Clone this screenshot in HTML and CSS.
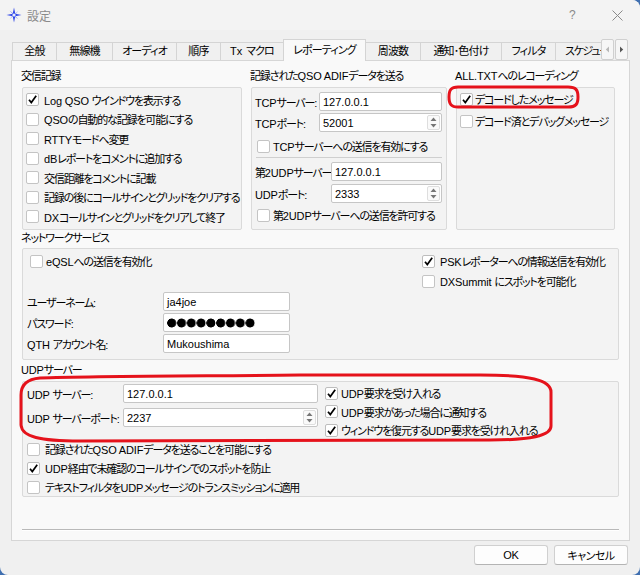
FILE: index.html
```html
<!DOCTYPE html>
<html lang="ja">
<head>
<meta charset="utf-8">
<title>設定</title>
<link rel="stylesheet" href="styles.css">
</head>
<body>
<div class="window">
  <div class="titlebar">
    <svg class="appicon" width="16" height="16" viewBox="0 0 16 16">
      <path d="M8 0.5 L9.3 6.7 L15.5 8 L9.3 9.3 L8 15.5 L6.7 9.3 L0.5 8 L6.7 6.7 Z" fill="#2f47e8"/>
      <path d="M3.5 3.5 L8.6 7.4 L12.5 3.5 L8.6 8.6 L12.5 12.5 L7.4 8.6 L3.5 12.5 L7.4 7.4 Z" fill="#5c70f0"/>
      <circle cx="8" cy="8" r="1.6" fill="#e8ecff"/>
    </svg>
    <span class="title">設定</span>
    <span class="tb-help">?</span>
    <span class="tb-close"><svg width="11" height="11" viewBox="0 0 11 11"><path d="M0.5 0.5 L10.5 10.5 M10.5 0.5 L0.5 10.5" stroke="#8a8a8a" stroke-width="1" fill="none"/></svg></span>
  </div>

  <div class="tabs">
    <div class="tablist">
      <div class="tab">全般</div>
      <div class="tab">無線機</div>
      <div class="tab">オーディオ</div>
      <div class="tab">順序</div>
      <div class="tab"><span class="en tx">Tx</span>マクロ</div>
      <div class="tab active">レポーティング</div>
      <div class="tab">周波数</div>
      <div class="tab">通知･色付け</div>
      <div class="tab">フィルタ</div>
      <div class="tab">スケジュール</div>
    </div>
    <div class="tabnav">
      <span class="navbtn"><svg width="5" height="7" viewBox="0 0 5 7"><path d="M4 0.5 L0.8 3.5 L4 6.5 Z" fill="#b8b8b8"/></svg></span>
      <span class="navbtn"><svg width="5" height="7" viewBox="0 0 5 7"><path d="M1 0.5 L4.2 3.5 L1 6.5 Z" fill="#555"/></svg></span>
    </div>
  </div>

  <div class="panel">
    <div class="row1">
      <section class="group">
        <div class="gtitle">交信記録</div>
        <div class="frame f-log">
          <div class="cb"><span class="box on"><svg width="11" height="11" viewBox="0 0 11 11"><path d="M2 5.8 L4.3 8.6 L9.2 1.8" stroke="#000" stroke-width="1.7" fill="none"/></svg></span><span><span class="en">Log QSO </span>ウインドウを表示する</span></div>
          <div class="cb"><span class="box"></span><span><span class="en">QSO</span>の自動的な記録を可能にする</span></div>
          <div class="cb"><span class="box"></span><span><span class="en">RTTY</span>モードへ変更</span></div>
          <div class="cb"><span class="box"></span><span><span class="en">dB</span>レポートをコメントに追加する</span></div>
          <div class="cb"><span class="box"></span><span>交信距離をコメントに記載</span></div>
          <div class="cb"><span class="box"></span><span>記録の後にコールサインとグリッドをクリアする</span></div>
          <div class="cb"><span class="box"></span><span><span class="en">DX</span>コールサインとグリッドをクリアして終了</span></div>
        </div>
      </section>

      <section class="group">
        <div class="gtitle">記録された<span class="en">QSO ADIF</span>データを送る</div>
        <div class="frame f-adif">
          <div class="frow"><span class="lbl l-tcp"><span class="en">TCP</span>サーバー:</span><div class="input grow"><span class="val">127.0.0.1</span></div></div>
          <div class="frow"><span class="lbl l-tcp"><span class="en">TCP</span>ポート:</span><div class="input spin grow"><span class="val">52001</span><span class="arrows"><svg width="9" height="15" viewBox="0 0 9 15"><path d="M1.5 6 L4.5 2.5 L7.5 6 Z M1.5 9 L4.5 12.5 L7.5 9 Z" fill="#777"/></svg></span></div></div>
          <div class="cb cb-adif"><span class="box"></span><span><span class="en">TCP</span>サーバーへの送信を有効にする</span></div>
          <div class="sep"></div>
          <div class="frow"><span class="lbl l-udp2">第<span class="en">2UDP</span>サーバー</span><div class="input grow"><span class="val">127.0.0.1</span></div></div>
          <div class="frow r5"><span class="lbl l-udp2"><span class="en">UDP</span>ポート:</span><div class="input spin grow"><span class="val">2333</span><span class="arrows"><svg width="9" height="15" viewBox="0 0 9 15"><path d="M1.5 6 L4.5 2.5 L7.5 6 Z M1.5 9 L4.5 12.5 L7.5 9 Z" fill="#777"/></svg></span></div></div>
          <div class="cb cb-adif2"><span class="box"></span><span>第<span class="en">2UDP</span>サーバーへの送信を許可する</span></div>
        </div>
      </section>

      <section class="group">
        <div class="gtitle"><span class="en">ALL.TXT</span>へのレコーディング</div>
        <div class="frame f-all">
          <div class="cb"><span class="box on"><svg width="11" height="11" viewBox="0 0 11 11"><path d="M2 5.8 L4.3 8.6 L9.2 1.8" stroke="#000" stroke-width="1.7" fill="none"/></svg></span><span>デコードしたメッセージ</span></div>
          <div class="cb"><span class="box"></span><span>デコード済とデバッグメッセージ</span></div>
        </div>
      </section>
    </div>

    <section class="group g-net">
      <div class="gtitle">ネットワークサービス</div>
      <div class="frame f-net">
        <div class="net-left">
          <div class="cb cb-eqsl"><span class="box"></span><span><span class="en">eQSL</span>への送信を有効化</span></div>
          <div class="frow n-row"><span class="lbl l-net">ユーザーネーム:</span><div class="input w-net"><span class="val">ja4joe</span></div></div>
          <div class="frow"><span class="lbl l-net">パスワード:</span><div class="input w-net"><span class="dots" aria-label="password"></span></div></div>
          <div class="frow"><span class="lbl l-net"><span class="en">QTH </span>アカウント名:</span><div class="input w-net"><span class="val">Mukoushima</span></div></div>
        </div>
        <div class="net-right">
          <div class="cb"><span class="box on"><svg width="11" height="11" viewBox="0 0 11 11"><path d="M2 5.8 L4.3 8.6 L9.2 1.8" stroke="#000" stroke-width="1.7" fill="none"/></svg></span><span><span class="en">PSK</span>レポーターへの情報送信を有効化</span></div>
          <div class="cb"><span class="box"></span><span><span class="en">DXSummit </span>にスポットを可能化</span></div>
        </div>
      </div>
    </section>

    <section class="group g-udp">
      <div class="gtitle"><span class="en">UDP</span>サーバー</div>
      <div class="frame f-udp">
        <div class="udp-top">
          <div class="udp-form">
            <div class="frow u-row"><span class="lbl l-u"><span class="en">UDP </span>サーバー:</span><div class="input w-u"><span class="val">127.0.0.1</span></div></div>
            <div class="frow u-row u-row2"><span class="lbl l-u"><span class="en">UDP </span>サーバーポート:</span><div class="input spin w-u"><span class="val">2237</span><span class="arrows"><svg width="9" height="15" viewBox="0 0 9 15"><path d="M1.5 6 L4.5 2.5 L7.5 6 Z M1.5 9 L4.5 12.5 L7.5 9 Z" fill="#777"/></svg></span></div></div>
          </div>
          <div class="udp-checks">
            <div class="cb"><span class="box on"><svg width="11" height="11" viewBox="0 0 11 11"><path d="M2 5.8 L4.3 8.6 L9.2 1.8" stroke="#000" stroke-width="1.7" fill="none"/></svg></span><span><span class="en">UDP</span>要求を受け入れる</span></div>
            <div class="cb"><span class="box on"><svg width="11" height="11" viewBox="0 0 11 11"><path d="M2 5.8 L4.3 8.6 L9.2 1.8" stroke="#000" stroke-width="1.7" fill="none"/></svg></span><span><span class="en">UDP</span>要求があった場合に通知する</span></div>
            <div class="cb"><span class="box on"><svg width="11" height="11" viewBox="0 0 11 11"><path d="M2 5.8 L4.3 8.6 L9.2 1.8" stroke="#000" stroke-width="1.7" fill="none"/></svg></span><span>ウィンドウを復元する<span class="en">UDP</span>要求を受けれ入れる</span></div>
          </div>
        </div>
        <div class="udp-bottom">
          <div class="cb"><span class="box"></span><span>記録された<span class="en">QSO ADIF</span>データを送ることを可能にする</span></div>
          <div class="cb"><span class="box on"><svg width="11" height="11" viewBox="0 0 11 11"><path d="M2 5.8 L4.3 8.6 L9.2 1.8" stroke="#000" stroke-width="1.7" fill="none"/></svg></span><span><span class="en">UDP</span>経由で未確認のコールサインでのスポットを防止</span></div>
          <div class="cb"><span class="box"></span><span>テキストフィルタを<span class="en">UDP</span>メッセージのトランスミッションに適用</span></div>
        </div>
      </div>
    </section>

    <div class="hline"></div>
  </div>

  <div class="buttons">
    <button class="btn"><span class="en">OK</span></button>
    <button class="btn">キャンセル</button>
  </div>

  <svg class="annot" width="640" height="575" viewBox="0 0 640 575">
    <path d="M458 87 L568 87 C576 87 578 90 578 97 C578 104 576 107 568 107 L458 107 C451 107 449 104 449 97 C449 90 451 87 458 87 Z" fill="none" stroke="#e5121b" stroke-width="3"/>
    <path d="M40 378 C90 376 200 376 300 375 L480 375 C530 375 551 380 551 392 L551 426 C551 436 530 440 490 440 L80 441 C40 441 22 437 21 425 L21 395 C21 384 28 379 40 378 Z" fill="none" stroke="#e5121b" stroke-width="3"/>
  </svg>
</div>
</body>
</html>
```

FILE: styles.css
```css
* { box-sizing: border-box; }
html, body { margin: 0; padding: 0; }
body {
  width: 640px;
  height: 575px;
  overflow: hidden;
  background: #3f6fb0;
  font-family: "Liberation Sans", "Noto Sans CJK JP", sans-serif;
  font-size: 11px;
  letter-spacing: -1.15px;
  font-feature-settings: "palt";
  color: #000;
}
.en { letter-spacing: -0.15px; }
.window {
  position: relative;
  width: 640px;
  height: 575px;
  background: #f0f0f0;
  border-radius: 0 8px 8px 8px;
  overflow: hidden;
}

/* title bar */
.titlebar {
  height: 30px;
  display: flex;
  align-items: center;
  padding-left: 6px;
  background: #f3f3f3;
}
.appicon { flex: none; }
.title { margin-left: 5px; color: #8a8a8a; font-size: 12px; letter-spacing: 0; }
.tb-help { margin-left: auto; color: #8a8a8a; font-size: 12px; letter-spacing: 0; width: 12px; margin-right: 31px; }
.tb-close { display: flex; margin-right: 17px; }

/* tabs */
.tabs {
  display: flex;
  height: 21px;
  margin-top: 9px;
  padding-left: 12px;
  position: relative;
  z-index: 2;
}
.tablist {
  display: flex;
  align-items: flex-end;
  width: 589px;
  height: 22px;
  overflow: hidden;
}
.tab {
  flex: none;
  height: 18px;
  margin-bottom: 1px;
  margin-right: -1px;
  border: 1px solid #d4d4d4;
  border-bottom: none;
  background: #f0f0f0;
  display: flex;
  align-items: center;
  justify-content: center;
  white-space: nowrap;
  overflow: hidden;
  line-height: 1;
  letter-spacing: -0.85px;
}
.tx { margin-right: 4px; }
.tab:nth-child(1) { width: 45px; }
.tab:nth-child(2) { width: 57px; }
.tab:nth-child(3) { width: 65px; }
.tab:nth-child(4) { width: 45px; }
.tab:nth-child(5) { width: 64px; }
.tab:nth-child(6) { width: 83px; }
.tab:nth-child(7) { width: 56px; }
.tab:nth-child(8) { width: 82px; }
.tab:nth-child(9) { width: 55px; }
.tab:nth-child(10) { width: 80px; justify-content: flex-start; padding-left: 9px; letter-spacing: -1.3px; }
.tab.active {
  height: 22px;
  margin-bottom: 0;
  background: #f9f9f9;
  position: relative;
  z-index: 3;
  align-items: flex-start;
  padding-top: 5px;
}
.tabnav {
  display: flex;
  gap: 1px;
  height: 21px;
}
.navbtn {
  width: 13px;
  height: 21px;
  border: 1px solid #d0d0d0;
  border-radius: 2px;
  background: #f6f6f6;
  display: flex;
  align-items: center;
  justify-content: center;
}

/* panel */
.panel {
  margin-left: 11px;
  width: 619px;
  height: 481px;
  border: 1px solid #d6d6d6;
  background: #f9f9f9;
  padding: 7px 10px 0 10px;
}
.row1 {
  display: grid;
  grid-template-columns: 220px 196px 159px;
  column-gap: 9px;
  height: 160px;
}
.group { display: flex; flex-direction: column; }
.gtitle {
  height: 16px;
  line-height: 16px;
  margin-left: -1px;
  margin-bottom: 3px;
  white-space: nowrap;
}
.frame {
  flex: 1;
  border: 1px solid #dadada;
  border-radius: 2px;
  background: #f3f3f3;
}

/* checkboxes */
.cb {
  display: flex;
  align-items: center;
  white-space: nowrap;
  height: 19.5px;
}
.box {
  flex: none;
  width: 13px;
  height: 13px;
  border: 1px solid #c4c4c4;
  border-radius: 2px;
  background: #fff;
  margin-right: 5px;
  display: flex;
  align-items: center;
  justify-content: center;
}
.box.on { border-color: #bdbdbd; }

.f-log { padding: 2px 3px; }

.f-adif { padding: 3px 4px 0 3px; }
.frow { display: flex; align-items: center; height: 21px; white-space: nowrap; }
.lbl { flex: none; }
.l-tcp { width: 64px; }
.l-udp2 { width: 76px; overflow: hidden; }
.grow { flex: 1; }
.input {
  height: 19px;
  background: #fff;
  border: 1px solid #c6c6c6;
  border-radius: 2px;
  display: flex;
  align-items: center;
  padding-left: 3px;
}
.val { font-size: 11px; letter-spacing: 0; }
.spin { padding-right: 1px; }
.arrows {
  margin-left: auto;
  width: 13px;
  height: 15px;
  border: 1px solid #dedede;
  border-radius: 2px;
  display: flex;
  align-items: center;
  justify-content: center;
  background: #fafafa;
}
.cb-adif { margin-top: 2px; height: 22px; padding-left: 2px; }
.cb-adif .box, .cb-adif2 .box { margin-right: 3px; }
.cb-adif2 { height: 22px; padding-left: 2px; }
.sep { height: 1px; background: #cfcfcf; margin: 0 0 3px 1px; }
.r5 { margin-top: 1px; }

.f-all { padding: 0 3px; }
.f-all .cb { height: 22px; }
.f-all .box { margin-right: 2px; }

/* network */
.g-net .gtitle { margin-top: 2px; margin-bottom: 2px; }
.f-net {
  flex: none;
  height: 112px;
  display: flex;
  justify-content: space-between;
  padding: 2px 0 0 4px;
}
.net-left { width: 270px; }
.cb-eqsl { height: 20px; padding-left: 3px; }
.cb-eqsl .box { margin-right: 3px; }
.n-row { margin-top: 20px; }
.l-net { width: 136px; }
.w-net { width: 127px; }
.dots {
  display: block;
  width: 88px;
  height: 10px;
  background-image: radial-gradient(circle at 4.7px 5px, #000 4.2px, transparent 4.8px);
  background-size: 9.8px 10px;
  background-repeat: repeat-x;
}
.net-right { width: 196px; }
.net-right .cb { height: 20px; }

/* udp */
.g-udp .gtitle { margin-top: 2px; }
.f-udp { flex: none; height: 116px; padding: 2px 0 0 4px; }
.udp-top { display: flex; }
.udp-form { width: 295px; }
.u-row { height: 19px; }
.u-row2 { margin-top: 5px; }
.l-u { width: 96px; }
.w-u { width: 195px; }
.udp-checks { margin-left: 3px; }
.udp-checks .cb { height: 18.5px; }
.udp-checks .box { margin-right: 3px; }
.udp-bottom .cb { height: 19px; }

.hline {
  height: 2px;
  margin-top: 32px;
  border-top: 1px solid #b9b9b9;
  border-bottom: 1px solid #ffffff;
}

/* buttons */
.buttons {
  display: flex;
  justify-content: flex-end;
  gap: 6px;
  margin-top: 4px;
  padding-right: 12px;
}
.btn {
  width: 74px;
  height: 20px;
  background: #fdfdfd;
  border: 1px solid #d0d0d0;
  border-bottom-color: #b4b4b4;
  border-radius: 3px;
  font: inherit;
  font-size: 11px;
  letter-spacing: -0.5px;
  color: #000;
  padding: 0;
}

.annot {
  position: absolute;
  left: 0;
  top: 0;
  pointer-events: none;
}
```
